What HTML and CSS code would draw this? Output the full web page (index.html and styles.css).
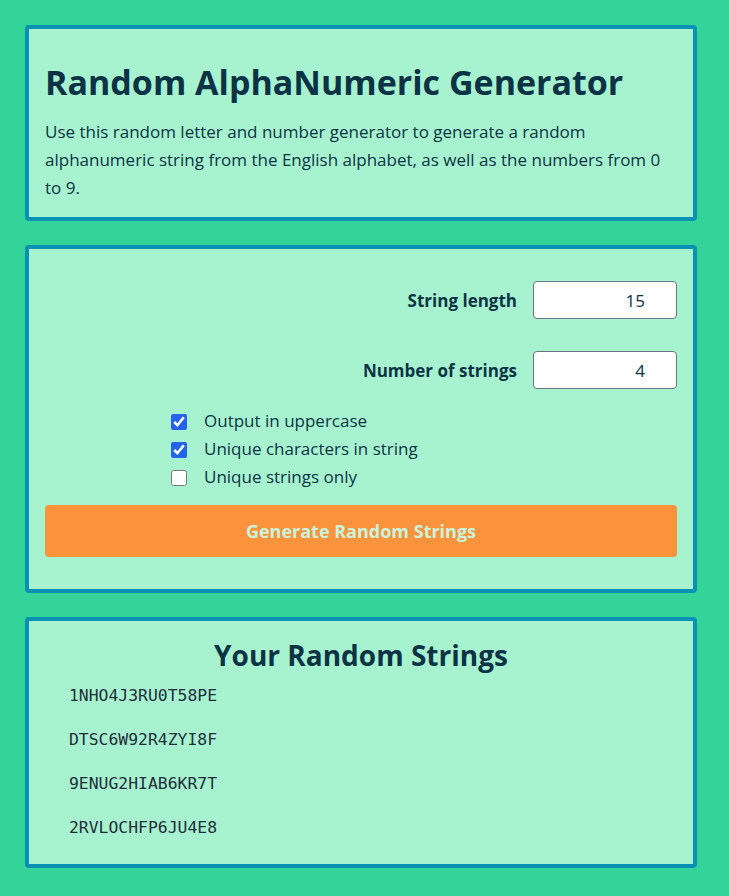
FILE: index.html
```html
<!DOCTYPE html>
<html lang="en">
<head>
<meta charset="utf-8">
<title>Random AlphaNumeric Generator</title>
<link rel="stylesheet" href="styles.css">
</head>
<body>
<main class="page">
  <section class="card intro">
    <h1 class="title">Random AlphaNumeric Generator</h1>
    <p class="lead">Use this random letter and number generator to generate a random alphanumeric string from the English alphabet, as well as the numbers from 0 to 9.</p>
  </section>

  <section class="card form">
    <div class="field">
      <label class="field-label" for="len">String length</label>
      <input class="field-input" id="len" type="text" value="15">
    </div>
    <div class="field">
      <label class="field-label" for="num">Number of strings</label>
      <input class="field-input" id="num" type="text" value="4">
    </div>
    <div class="options">
      <label class="option"><input class="check" type="checkbox" checked><span>Output in uppercase</span></label>
      <label class="option"><input class="check" type="checkbox" checked><span>Unique characters in string</span></label>
      <label class="option"><input class="check" type="checkbox"><span>Unique strings only</span></label>
    </div>
    <button class="generate" type="button">Generate Random Strings</button>
  </section>

  <section class="card results">
    <h2 class="results-title">Your Random Strings</h2>
    <ul class="strings">
      <li>1NHO4J3RU0T58PE</li>
      <li>DTSC6W92R4ZYI8F</li>
      <li>9ENUG2HIAB6KR7T</li>
      <li>2RVLOCHFP6JU4E8</li>
    </ul>
  </section>
</main>
</body>
</html>
```

FILE: styles.css
```css
* { box-sizing: border-box; }

html, body {
  margin: 0;
  padding: 0;
  background: #34d399;
}

body {
  font-family: "Open Sans", "Noto Sans", sans-serif;
  color: #0b3345;
}

.page {
  width: 672px;
  margin-left: 25px;
  padding: 25px 0 28px;
  display: flex;
  flex-direction: column;
  gap: 24px;
}

.card {
  background: #a7f3d0;
  border: 4px solid #0891b2;
  border-radius: 4px;
  padding: 16px;
}

/* intro */
.intro { padding-top: 16px; padding-bottom: 15px; }

.title {
  margin: 17px 0 16px;
  font-size: 34px;
  line-height: 40px;
  font-weight: 700;
  color: #0b3345;
}

.lead {
  margin: 0;
  font-size: 17px;
  line-height: 28px;
  color: #0b3345;
}

/* form */
.form { padding: 32px 16px; }

.field {
  display: flex;
  justify-content: flex-end;
  align-items: center;
  gap: 16px;
}

.field + .field { margin-top: 32px; }

.field-label {
  font-weight: 700;
  font-size: 17px;
}

.field-input {
  width: 144px;
  height: 38px;
  border: 1px solid #6b7280;
  border-radius: 4px;
  background: #fff;
  padding: 0 31px 0 8px;
  text-align: right;
  font-family: "Open Sans", "Noto Sans", sans-serif;
  font-size: 17px;
  color: #0b3345;
}

.options {
  margin-top: 19px;
  padding-left: 126px;
  display: flex;
  flex-direction: column;
}

.option {
  display: flex;
  align-items: center;
  height: 28px;
  font-size: 17px;
  line-height: 28px;
}

.option span { margin-top: -2px; }

.check {
  width: 16px;
  height: 16px;
  margin: 0 17px 0 0;
  accent-color: #2563eb;
}

.generate {
  margin-top: 13px;
  width: 100%;
  height: 52px;
  border: 0;
  border-radius: 4px;
  background: #fb923c;
  color: #c8f5dd;
  font-family: "Open Sans", "Noto Sans", sans-serif;
  font-weight: 700;
  font-size: 18px;
}

/* results */
.results { padding: 16px 16px 24px; }

.results-title {
  margin: 0;
  text-align: center;
  font-size: 28px;
  line-height: 36px;
  font-weight: 700;
}

.strings {
  list-style: none;
  margin: 0;
  padding: 0 0 0 24px;
}

.strings li {
  font-family: "DejaVu Sans Mono", monospace;
  font-size: 16.4px;
  line-height: 24px;
  margin-top: 20px;
  color: #1f2e3a;
}

.strings li:first-child { margin-top: 11px; }
```
